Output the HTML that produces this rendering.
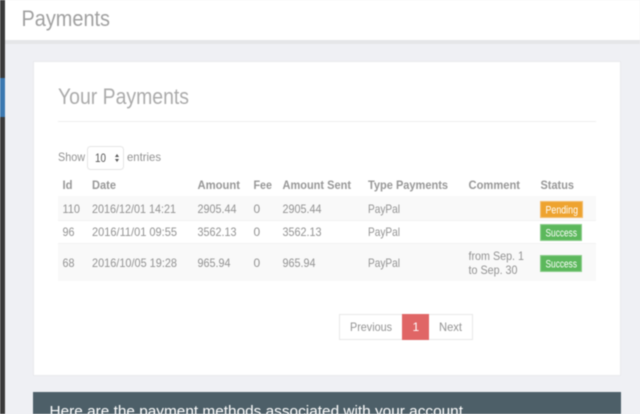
<!DOCTYPE html>
<html><head><meta charset="utf-8"><title>Payments</title>
<style>
html,body{margin:0;padding:0;width:640px;height:414px;overflow:hidden;background:#eff0f4}
svg{display:block;filter:blur(.4px)}
text{font-family:"Liberation Sans",sans-serif;font-size:12px;fill:#929292}
.b{font-weight:bold;fill:#979797;font-size:11.5px}
.w{fill:#fff;font-size:11px}
</style></head><body>
<svg width="640" height="414" viewBox="0 0 640 414" xmlns="http://www.w3.org/2000/svg">
<rect width="640" height="414" fill="#eff0f4"/>
<rect x="0" y="0" width="5" height="414" fill="#3a3a3a"/>
<rect x="0" y="78" width="5" height="39" fill="#3b78b0"/>
<rect x="5" y="0" width="635" height="40" fill="#fff"/>
<rect x="5" y="40" width="635" height="4" fill="#e5e6e8"/>
<text x="21.5" y="26" style="font-size:22px;fill:#a0a0a0" textLength="88.5" lengthAdjust="spacingAndGlyphs">Payments</text>
<rect x="33.5" y="61.5" width="587" height="314" fill="#fff" stroke="#e9eaed"/>
<text x="58" y="104" style="font-size:22px;fill:#ababab" textLength="131" lengthAdjust="spacingAndGlyphs">Your Payments</text>
<rect x="58" y="121" width="538" height="1" fill="#eeeeee"/>
<text x="58" y="161" textLength="27" lengthAdjust="spacingAndGlyphs">Show</text>
<rect x="87.5" y="146.5" width="36" height="23" rx="3" fill="#fff" stroke="#e6e6e6"/>
<text x="95" y="162" style="fill:#555" textLength="11" lengthAdjust="spacingAndGlyphs">10</text>
<path d="M115 157l2-3 2 3zM115 159l2 3 2-3z" fill="#555"/>
<text x="127" y="161" textLength="34" lengthAdjust="spacingAndGlyphs">entries</text>
<text class="b" x="62.5" y="189" textLength="10" lengthAdjust="spacingAndGlyphs">Id</text>
<text class="b" x="92" y="189" textLength="24" lengthAdjust="spacingAndGlyphs">Date</text>
<text class="b" x="197.5" y="189" textLength="42.5" lengthAdjust="spacingAndGlyphs">Amount</text>
<text class="b" x="253.5" y="189" textLength="18.5" lengthAdjust="spacingAndGlyphs">Fee</text>
<text class="b" x="282.5" y="189" textLength="68.5" lengthAdjust="spacingAndGlyphs">Amount Sent</text>
<text class="b" x="368" y="189" textLength="80" lengthAdjust="spacingAndGlyphs">Type Payments</text>
<text class="b" x="468.5" y="189" textLength="51.5" lengthAdjust="spacingAndGlyphs">Comment</text>
<text class="b" x="540.5" y="189" textLength="33.5" lengthAdjust="spacingAndGlyphs">Status</text>
<rect x="58" y="196" width="538" height="24" fill="#f9f9f9"/>
<rect x="58" y="243" width="538" height="38" fill="#f9f9f9"/>
<rect x="58" y="220" width="538" height="1" fill="#f3f3f3"/>
<rect x="58" y="243" width="538" height="1" fill="#f3f3f3"/>
<text x="62.5" y="213" textLength="17.5" lengthAdjust="spacingAndGlyphs">110</text>
<text x="92" y="213" textLength="84" lengthAdjust="spacingAndGlyphs">2016/12/01 14:21</text>
<text x="197.5" y="213" textLength="39" lengthAdjust="spacingAndGlyphs">2905.44</text>
<text x="253.5" y="213">0</text>
<text x="282.5" y="213" textLength="39" lengthAdjust="spacingAndGlyphs">2905.44</text>
<text x="368" y="213" textLength="32" lengthAdjust="spacingAndGlyphs">PayPal</text>
<text x="62.5" y="236" textLength="12" lengthAdjust="spacingAndGlyphs">96</text>
<text x="92" y="236" textLength="85" lengthAdjust="spacingAndGlyphs">2016/11/01 09:55</text>
<text x="197.5" y="236" textLength="39" lengthAdjust="spacingAndGlyphs">3562.13</text>
<text x="253.5" y="236">0</text>
<text x="282.5" y="236" textLength="39" lengthAdjust="spacingAndGlyphs">3562.13</text>
<text x="368" y="236" textLength="32" lengthAdjust="spacingAndGlyphs">PayPal</text>
<text x="62.5" y="267" textLength="12" lengthAdjust="spacingAndGlyphs">68</text>
<text x="92" y="267" textLength="85" lengthAdjust="spacingAndGlyphs">2016/10/05 19:28</text>
<text x="197.5" y="267" textLength="33" lengthAdjust="spacingAndGlyphs">965.94</text>
<text x="253.5" y="267">0</text>
<text x="282.5" y="267" textLength="33" lengthAdjust="spacingAndGlyphs">965.94</text>
<text x="368" y="267" textLength="32" lengthAdjust="spacingAndGlyphs">PayPal</text>
<text x="468.5" y="260" textLength="55.5" lengthAdjust="spacingAndGlyphs">from Sep. 1</text>
<text x="468.5" y="274" textLength="49" lengthAdjust="spacingAndGlyphs">to Sep. 30</text>
<rect x="540.5" y="201.5" width="42" height="16" fill="#eea32f" stroke="#f2bd70"/>
<text class="w" x="545.5" y="213.5" textLength="32.5" lengthAdjust="spacingAndGlyphs">Pending</text>
<rect x="540.5" y="224.5" width="41" height="16" fill="#5cb85c" stroke="#8ccd8c"/>
<text class="w" x="545.5" y="236.5" textLength="31.5" lengthAdjust="spacingAndGlyphs">Success</text>
<rect x="540.5" y="255.5" width="41" height="16" fill="#5cb85c" stroke="#8ccd8c"/>
<text class="w" x="545.5" y="267.5" textLength="31.5" lengthAdjust="spacingAndGlyphs">Success</text>
<rect x="339.5" y="314.5" width="133" height="25" fill="#fff" stroke="#e8e8e8"/>
<rect x="402" y="314" width="27" height="26" fill="#e06666"/>
<text x="350" y="331" textLength="42" lengthAdjust="spacingAndGlyphs">Previous</text>
<text x="412.5" y="331" style="fill:#fff">1</text>
<text x="439" y="331" textLength="23" lengthAdjust="spacingAndGlyphs">Next</text>
<rect x="33" y="392" width="588" height="22" fill="#4d5f68"/>
<text x="49.5" y="416" style="font-size:15px;fill:#fff" textLength="413.5" lengthAdjust="spacingAndGlyphs">Here are the payment methods associated with your account</text>
</svg>
</body></html>
